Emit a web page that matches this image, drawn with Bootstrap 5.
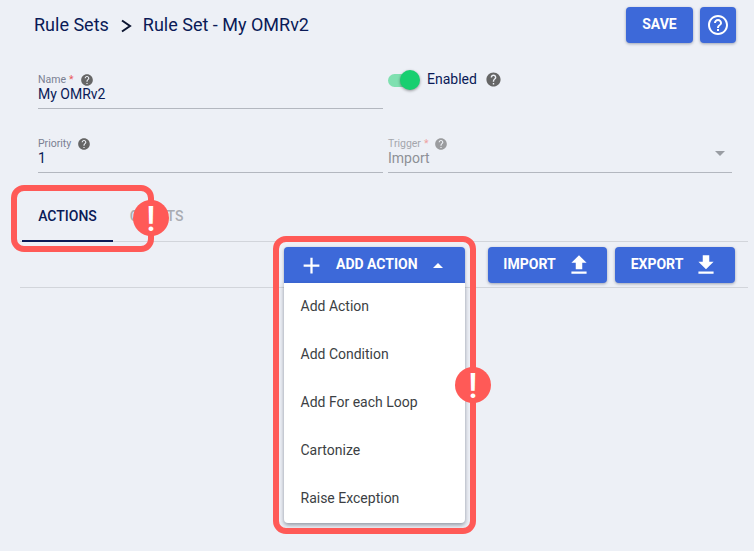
<!DOCTYPE html>
<html lang="en">
<head>
<meta charset="utf-8">
<title>Rule Set</title>
<link href="https://cdn.jsdelivr.net/npm/bootstrap@5.3.0/dist/css/bootstrap.min.css" rel="stylesheet">
<style>
html,body{height:100%;}
body{background:#edf0f6;font-family:Roboto,"Liberation Sans",sans-serif;color:#0a1a56;overflow:hidden;position:relative;font-size:14px;}
.hdr{height:50px;padding:7px 18px 0 34px;}
.crumb{font-size:18px;line-height:36px;color:#0a1a56;}
.crumb-sep{margin:1px 11px 0 10px;display:block;}
.act{background:#3d69d9;border:0;border-radius:4px;color:#fff;font-family:inherit;font-weight:700;font-size:14px;height:36px;box-shadow:0 1px 3px rgba(40,50,80,.4);display:flex;align-items:center;justify-content:center;padding:0;}
.act:hover,.act:focus{background:#3d69d9;color:#fff;}
.btn-t{margin-bottom:2px;}
.act-save{width:67px;margin-right:7px;}
.act-help{width:36px;}
.fields{padding:0 22px 0 38px;margin:0;}
.fld{height:64px;padding-top:22px;flex:0 0 345px;width:345px;}
.fld-r{flex:0 0 344px;width:344px;margin-left:5px;}
.fld-inner{border-bottom:1px solid #b3b7bf;height:37px;padding-top:1px;position:relative;}
.lbl{font-size:10.5px;line-height:14px;color:#7a7f92;display:flex;align-items:center;height:13px;}
.req{color:#e95a5a;margin-left:3px;}
.val{font-size:14px;line-height:16px;color:#0a1a56;}
.qm{display:block;margin-left:6px;}
.qm-lg{margin-left:8px;}
.off .lbl{color:#a4a7ad;}
.off .val{color:#8d9096;}
.off .req{color:#eda2a2;}
.off .qm{opacity:.6;}
.caret-down{position:absolute;right:7px;top:15px;width:0;height:0;border-left:5px solid transparent;border-right:5px solid transparent;border-top:5px solid #9a9da3;}
.tgl{padding-top:22px;height:64px;}
.tgl-row{height:14px;}
.track{width:28px;height:13px;border-radius:7px;background:#7fe0b0;position:relative;display:block;margin-top:2px;}
.thumb{position:absolute;left:12px;top:-3.5px;width:20px;height:20px;border-radius:50%;background:#18cf70;box-shadow:0 1px 3px rgba(0,0,0,.4);}
.tgl-text{margin-left:11px;color:#0a1a56;}
.tabbar{margin:0 6px 0 20px;border-bottom:1px solid #d2d5db;height:64px;padding-top:22px;}
.tabx{width:91px;margin-left:2px;height:42px;text-align:center;font-size:14px;font-weight:500;line-height:20px;padding-top:6px;color:#a9acb2;}
.tabx.on{color:#0a1a56;border-bottom:2px solid #0a1a56;}
.tabx.second{margin-left:0;width:87px;}
.tools{margin:0 6px 0 20px;border-bottom:1px solid #d2d5db;height:46px;padding:5px 13px 0 264px;}
.drop{position:relative;width:181px;margin-right:23px;}
.act-add{width:181px;justify-content:flex-start;border-radius:4px 4px 0 0;padding-left:14px;}
.act-imp{width:119px;margin-right:8px;}
.act-exp{width:120px;}
.txt-l{margin-left:11px;}
.ico-r{margin-left:10px;}
.up-caret{width:0;height:0;border-left:5px solid transparent;border-right:5px solid transparent;border-bottom:5px solid #fff;margin-left:15px;}
.menu-x{display:block;position:absolute;left:0;top:36px;width:181px;min-width:0;border:0;border-radius:0 0 4px 4px;padding:0;margin:0;background:#fff;box-shadow:0 2px 4px rgba(30,40,60,.45);}
.menu-x .dropdown-item{height:48px;line-height:46px;padding:0 16.5px;font-size:14px;color:#3c3f44;}
.note-box{position:absolute;border:6px solid #ff5a57;border-radius:13px;pointer-events:none;z-index:1001;}
.note-a{left:11px;top:185px;width:143px;height:67px;}
.note-b{left:273px;top:236px;width:203px;height:298px;}
.note-dot{position:absolute;z-index:1002;width:36px;height:36px;border-radius:50%;background:#ff5a57;color:#fff;font-size:35px;font-weight:500;line-height:40px;text-align:center;font-family:Roboto,"Liberation Sans",sans-serif;}
.dot-a{left:133px;top:200px;}
.dot-b{left:455px;top:367px;}
</style>
</head>
<body>
<div class="hdr d-flex align-items-start">
  <div class="crumb d-flex align-items-center flex-grow-1">
    <span>Rule Sets</span>
    <svg class="crumb-sep" width="13" height="16" viewBox="0 0 13 16"><path d="M3 2.5 L11 8 L3 13.5" fill="none" stroke="#0b1430" stroke-width="2"/></svg>
    <span>Rule Set - My OMRv2</span>
  </div>
  <button class="btn act act-save" type="button"><span class="btn-t">SAVE</span></button>
  <button class="btn act act-help" type="button" aria-label="Help">
    <svg width="24" height="24" viewBox="0 0 24 24" fill="#fff"><path d="M11 18h2v-2h-2v2zm1-16C6.48 2 2 6.48 2 12s4.48 10 10 10 10-4.48 10-10S17.52 2 12 2zm0 18c-4.41 0-8-3.59-8-8s3.59-8 8-8 8 3.59 8 8-3.59 8-8 8zm0-14c-2.21 0-4 1.79-4 4h2c0-1.1.9-2 2-2s2 .9 2 2c0 2-3 1.75-3 5h2c0-2.25 3-2.5 3-5 0-2.21-1.79-4-4-4z"/></svg>
  </button>
</div>

<div class="fields d-flex flex-wrap">
  <div class="fld"><div class="fld-inner">
    <div class="lbl">Name<span class="req">*</span>
      <svg class="qm" width="14" height="14" viewBox="0 0 24 24" fill="#666"><path d="M12 2C6.48 2 2 6.48 2 12s4.48 10 10 10 10-4.48 10-10S17.52 2 12 2zm1 17h-2v-2h2v2zm2.07-7.75l-.9.92C13.45 12.9 13 13.5 13 15h-2v-.5c0-1.1.45-2.1 1.17-2.83l1.24-1.26c.37-.36.59-.86.59-1.41 0-1.1-.9-2-2-2s-2 .9-2 2H8c0-2.21 1.79-4 4-4s4 1.79 4 4c0 .88-.36 1.68-.93 2.25z"/></svg>
    </div>
    <div class="val">My OMRv2</div>
  </div></div>
  <div class="fld fld-r tgl"><div class="tgl-row d-flex align-items-center">
    <span class="track"><span class="thumb"></span></span>
    <span class="tgl-text">Enabled</span>
    <svg class="qm qm-lg" width="17" height="17" viewBox="0 0 24 24" fill="#666"><path d="M12 2C6.48 2 2 6.48 2 12s4.48 10 10 10 10-4.48 10-10S17.52 2 12 2zm1 17h-2v-2h2v2zm2.07-7.75l-.9.92C13.45 12.9 13 13.5 13 15h-2v-.5c0-1.1.45-2.1 1.17-2.83l1.24-1.26c.37-.36.59-.86.59-1.41 0-1.1-.9-2-2-2s-2 .9-2 2H8c0-2.21 1.79-4 4-4s4 1.79 4 4c0 .88-.36 1.68-.93 2.25z"/></svg>
  </div></div>
  <div class="fld"><div class="fld-inner">
    <div class="lbl">Priority
      <svg class="qm" width="14" height="14" viewBox="0 0 24 24" fill="#666"><path d="M12 2C6.48 2 2 6.48 2 12s4.48 10 10 10 10-4.48 10-10S17.52 2 12 2zm1 17h-2v-2h2v2zm2.07-7.75l-.9.92C13.45 12.9 13 13.5 13 15h-2v-.5c0-1.1.45-2.1 1.17-2.83l1.24-1.26c.37-.36.59-.86.59-1.41 0-1.1-.9-2-2-2s-2 .9-2 2H8c0-2.21 1.79-4 4-4s4 1.79 4 4c0 .88-.36 1.68-.93 2.25z"/></svg>
    </div>
    <div class="val">1</div>
  </div></div>
  <div class="fld fld-r off"><div class="fld-inner">
    <div class="lbl">Trigger<span class="req">*</span>
      <svg class="qm" width="14" height="14" viewBox="0 0 24 24" fill="#666"><path d="M12 2C6.48 2 2 6.48 2 12s4.48 10 10 10 10-4.48 10-10S17.52 2 12 2zm1 17h-2v-2h2v2zm2.07-7.75l-.9.92C13.45 12.9 13 13.5 13 15h-2v-.5c0-1.1.45-2.1 1.17-2.83l1.24-1.26c.37-.36.59-.86.59-1.41 0-1.1-.9-2-2-2s-2 .9-2 2H8c0-2.21 1.79-4 4-4s4 1.79 4 4c0 .88-.36 1.68-.93 2.25z"/></svg>
    </div>
    <div class="val">Import</div>
    <span class="caret-down"></span>
  </div></div>
</div>

<div class="tabbar d-flex">
  <div class="tabx on">ACTIONS</div>
  <div class="tabx second">CHARTS</div>
</div>

<div class="tools d-flex">
  <div class="drop">
    <button class="btn act act-add" type="button">
      <svg width="27" height="27" viewBox="0 0 24 24" fill="#fff"><path d="M19 13h-6v6h-2v-6H5v-2h6V5h2v6h6v2z"/></svg>
      <span class="txt-l btn-t">ADD ACTION</span>
      <span class="up-caret"></span>
    </button>
    <div class="dropdown-menu show menu-x">
      <a class="dropdown-item" href="#">Add Action</a>
      <a class="dropdown-item" href="#">Add Condition</a>
      <a class="dropdown-item" href="#">Add For each Loop</a>
      <a class="dropdown-item" href="#">Cartonize</a>
      <a class="dropdown-item" href="#">Raise Exception</a>
    </div>
  </div>
  <button class="btn act act-imp" type="button"><span class="btn-t">IMPORT</span>
    <svg class="ico-r" width="26" height="26" viewBox="0 0 24 24" fill="#fff"><path d="M9 16h6v-6h4l-7-7-7 7h4v6zm-4 2h14v2H5v-2z"/></svg>
  </button>
  <button class="btn act act-exp" type="button"><span class="btn-t">EXPORT</span>
    <svg class="ico-r" width="26" height="26" viewBox="0 0 24 24" fill="#fff"><path d="M19 9h-4V3H9v6H5l7 7 7-7zM5 18v2h14v-2H5z"/></svg>
  </button>
</div>

<div class="note-box note-a"></div>
<div class="note-dot dot-a">!</div>
<div class="note-box note-b"></div>
<div class="note-dot dot-b">!</div>

<script src="https://cdn.jsdelivr.net/npm/bootstrap@5.3.0/dist/js/bootstrap.bundle.min.js"></script>
</body>
</html>
